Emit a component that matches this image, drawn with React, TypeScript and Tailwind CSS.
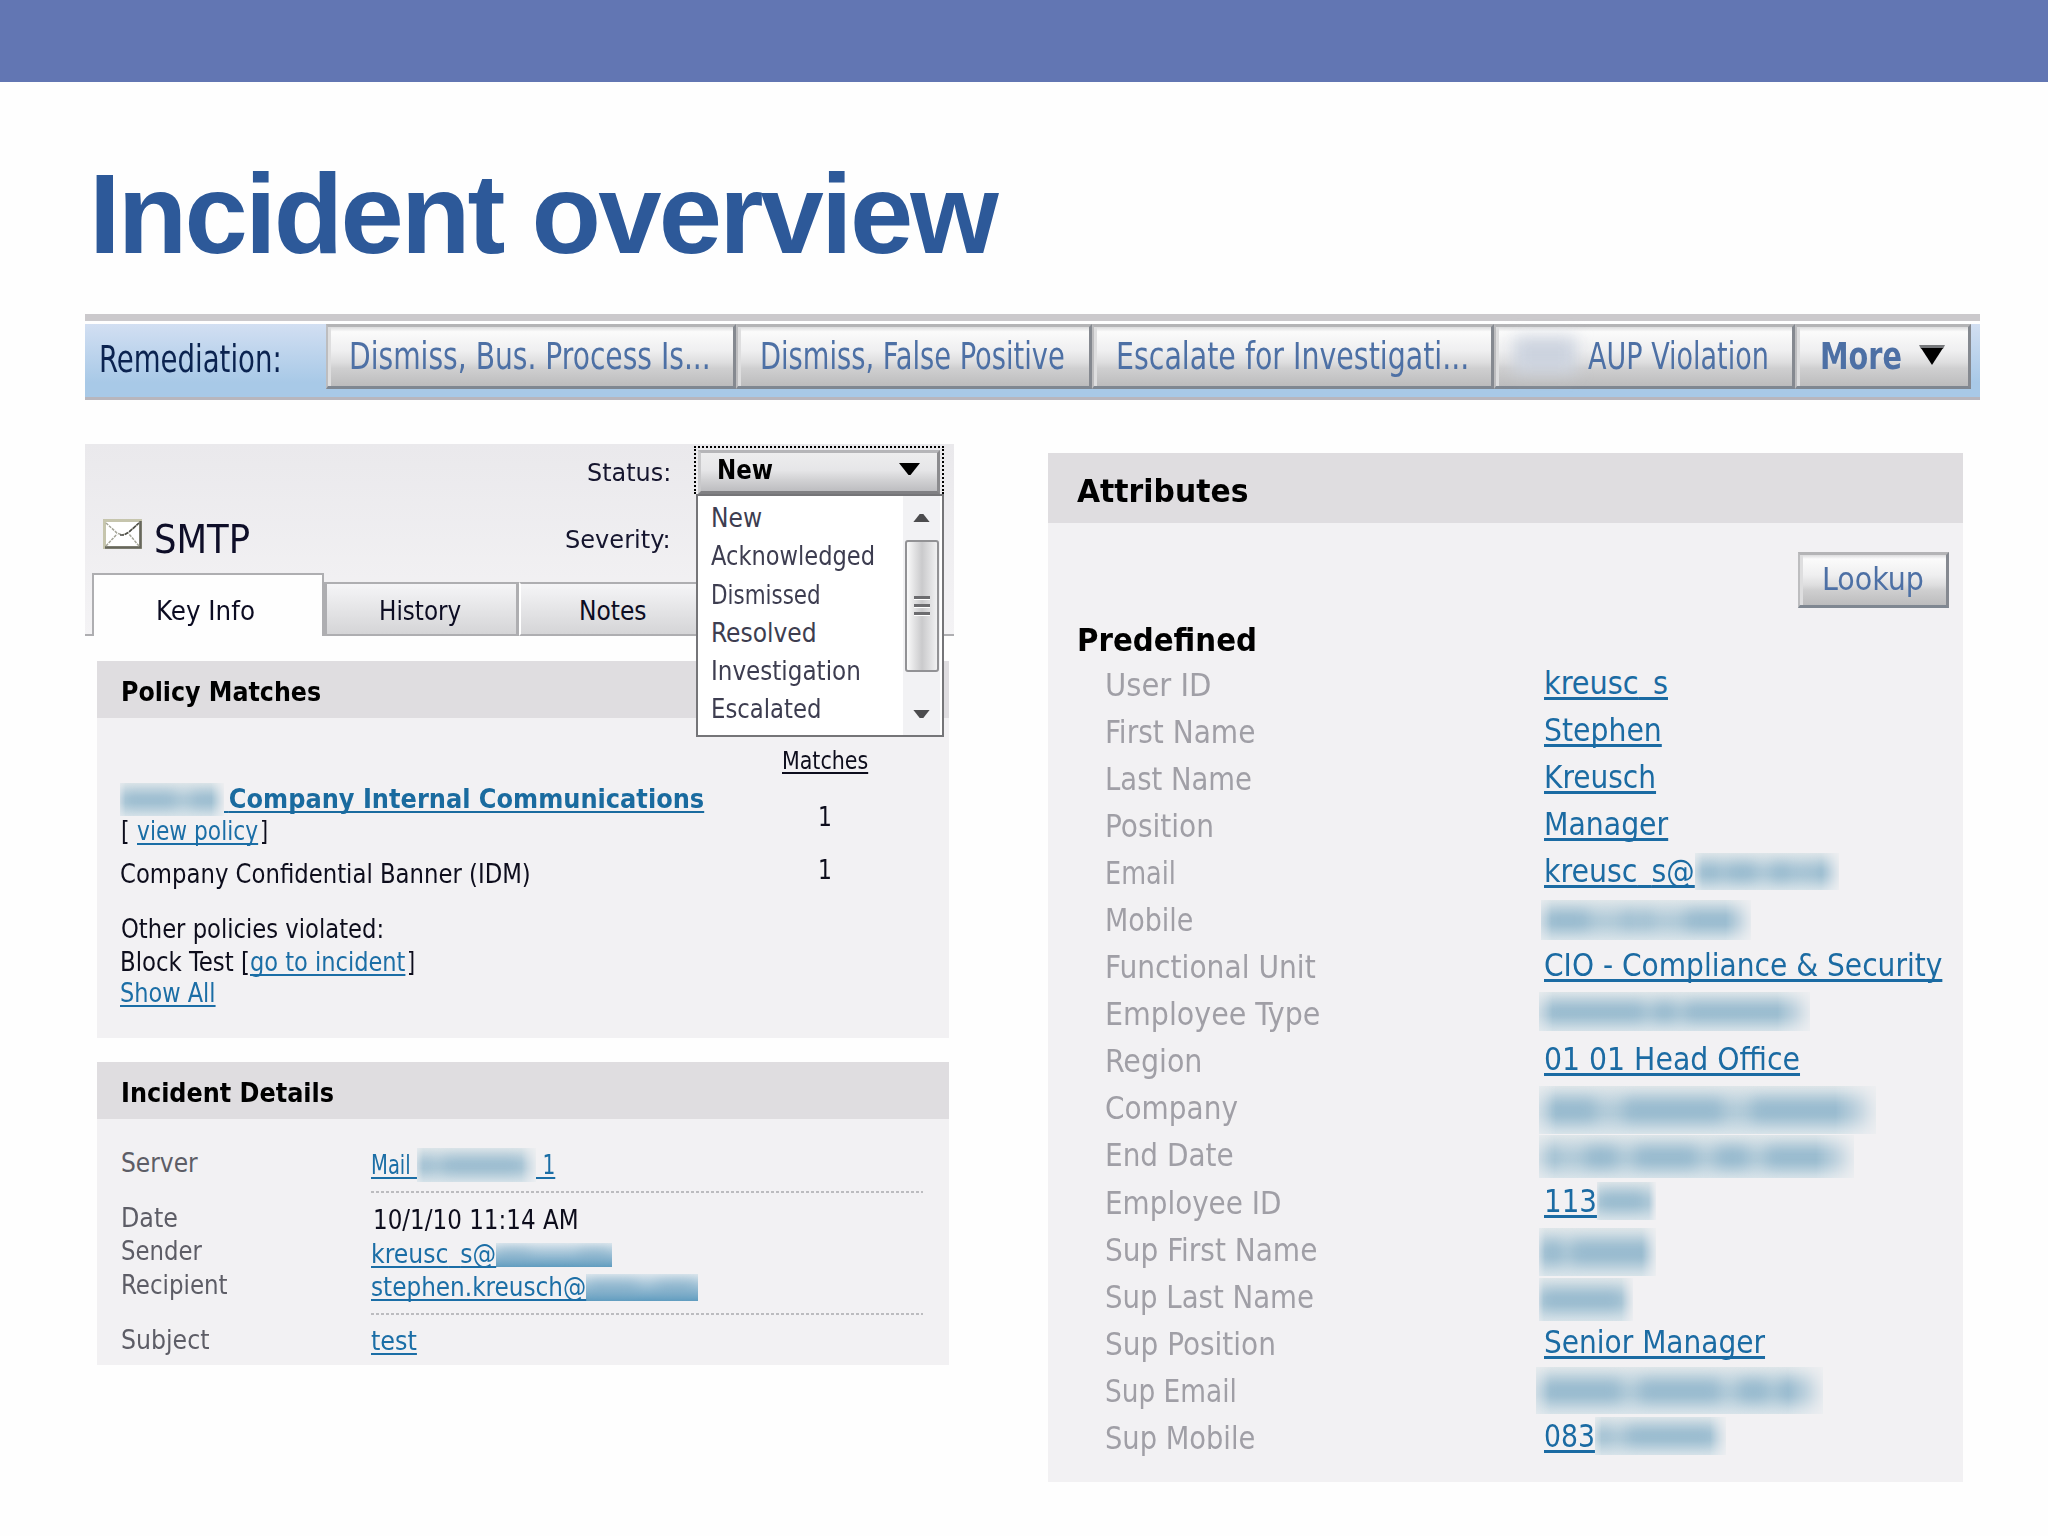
import { ReactNode, useLayoutEffect, useRef, useState } from 'react';
import clsx from 'clsx';

type AttributeRow = {
  label: string;
  labelWidth: string;
  value?: string;
  valueWidth?: string;
  hidden?: string;
  marks?: number[];
};

const STATUSES = [
  { name: 'New', width: 'w-[53px]' },
  { name: 'Acknowledged', width: 'w-[166px]' },
  { name: 'Dismissed', width: 'w-[112px]' },
  { name: 'Resolved', width: 'w-[108px]' },
  { name: 'Investigation', width: 'w-[152px]' },
  { name: 'Escalated', width: 'w-[112px]' },
];

const ATTRIBUTES: AttributeRow[] = [
  { label: 'User ID', labelWidth: 'w-[108px]', value: 'kreusc_s', valueWidth: 'w-[124px]' },
  { label: 'First Name', labelWidth: 'w-[152px]', value: 'Stephen', valueWidth: 'w-[118px]' },
  { label: 'Last Name', labelWidth: 'w-[149px]', value: 'Kreusch', valueWidth: 'w-[112px]' },
  { label: 'Position', labelWidth: 'w-[111px]', value: 'Manager', valueWidth: 'w-[124px]' },
  { label: 'Email', labelWidth: 'w-[73px]', value: 'kreusc_s@', valueWidth: 'w-[151px]', hidden: 'mt-[9px] h-[37px] w-[144px]', marks: [3, 1, 4, 2, 3, 1, 1, 1, 3] },
  { label: 'Mobile', labelWidth: 'w-[90px]', hidden: '-ml-[3px] mt-[9px] h-[40px] w-[210px]', marks: [5, 4, 1, 1, 1, 4, 7] },
  { label: 'Functional Unit', labelWidth: 'w-[213px]', value: 'CIO - Compliance & Security', valueWidth: 'w-[398px]' },
  { label: 'Employee Type', labelWidth: 'w-[217px]', hidden: '-ml-[5px] mt-[7px] h-[39px] w-[271px]', marks: [10, 1, 2, 1, 12] },
  { label: 'Region', labelWidth: 'w-[99px]', value: '01 01 Head Office', valueWidth: 'w-[256px]' },
  { label: 'Company', labelWidth: 'w-[135px]', hidden: '-ml-[5px] mt-[7px] h-[48px] w-[337px]', marks: [5, 3, 10, 3, 12] },
  { label: 'End Date', labelWidth: 'w-[131px]', hidden: '-ml-[5px] mt-[9px] h-[43px] w-[315px]', marks: [1, 3, 3, 2, 6, 2, 3, 2, 8] },
  { label: 'Employee ID', labelWidth: 'w-[178px]', value: '113', valueWidth: 'w-[53px]', hidden: 'mt-[8px] h-[38px] w-[59px]', marks: [5, 1] },
  { label: 'Sup First Name', labelWidth: 'w-[214px]', hidden: '-ml-[5px] mt-[7px] h-[48px] w-[117px]', marks: [2, 1, 8] },
  { label: 'Sup Last Name', labelWidth: 'w-[211px]', hidden: '-ml-[5px] mt-[10px] h-[43px] w-[94px]', marks: [8, 1] },
  { label: 'Sup Position', labelWidth: 'w-[173px]', value: 'Senior Manager', valueWidth: 'w-[221px]' },
  { label: 'Sup Email', labelWidth: 'w-[134px]', hidden: '-ml-[8px] mt-[5px] h-[47px] w-[287px]', marks: [8, 2, 8, 2, 3, 1, 4] },
  { label: 'Sup Mobile', labelWidth: 'w-[152px]', value: '083', valueWidth: 'w-[51px]', hidden: 'mt-[8px] h-[38px] w-[131px]', marks: [1, 2, 9, 1] },
];

// Stretches its text to the width of the box it is given
const Fit = ({ className, link, children }: { className: string; link?: boolean; children: ReactNode }) => {
  const box = useRef<HTMLDivElement>(null);
  const text = useRef<HTMLSpanElement>(null);
  const [ scale, setScale ] = useState(1);

  useLayoutEffect(() => {
    if (box.current && text.current) {
      setScale((box.current.clientWidth - (link ? 0 : 2)) / text.current.offsetWidth);
    }
  }, [ link ]);

  return (
    <div ref={box} className={clsx('shrink-0 leading-none whitespace-pre', !link && 'pl-[2px]', className)}>
      <span
        ref={text}
        className={clsx('inline-block origin-left align-top', link && 'underline decoration-[0.085em] underline-offset-[0.1em] [text-decoration-skip-ink:none]')}
        style={{ transform: `scaleX(${scale})` }}
      >
        {children}
      </span>
    </div>
  );
};

const Redacted = ({ className, marks, strong }: { className: string; marks: number[]; strong?: boolean }) => (
  <div
    className={clsx(
      'shrink-0 overflow-hidden',
      strong
        ? 'bg-linear-to-b from-[#dfe8ee] to-[#5f9cbf]'
        : 'bg-[linear-gradient(180deg,#e0e7ea,#bfd3de_45%,#bdd2dd_60%,#d9e4ea)] [mask-image:linear-gradient(90deg,rgba(0,0,0,0.6),#000_5%,#000_88%,rgba(0,0,0,0.2))]',
      className,
    )}
  >
    <div className="flex h-full items-center px-[2%] opacity-50 blur-[7px]">
      {marks.map((size, i) => (
        <div key={i} className={clsx('h-[54%]', i % 2 === 0 ? 'bg-[#73a3c0]' : 'bg-[#73a3c0]/30')} style={{ flexGrow: size }} />
      ))}
    </div>
  </div>
);

const Button = ({ className, children }: { className: string; children: ReactNode }) => (
  <button
    className={clsx(
      'flex shrink-0 items-start border-t-[3px] border-r-[3px] border-b-[3px] border-l-[2px] border-t-[#b4b4b6] border-r-[#858990] border-b-[#7f8791] border-l-[#bdbdbf]',
      'bg-[linear-gradient(180deg,#dcdcdd_0,#fbfbfb_8%,#efeff0_40%,#dededf_60%,#cfcfd0_70%,#bcbcbd_100%)] text-[#4d70a5] shadow-[inset_3px_0_0_#dededf]',
      className,
    )}
  >
    {children}
  </button>
);

const Remediation = () => (
  <section className="mt-[43px] ml-[85px] w-[1895px]">
    <div className="mb-[3px] h-[7px] bg-[#cbc9cc]" />
    <div className="flex h-[76px] items-start border-b-[3px] border-[#b8b6bd] bg-linear-to-b from-[#d2dff2] to-[#a8c9e7] to-80% text-[37px]">
      <Fit className="mt-[17px] mr-[44px] ml-[12px] w-[185px] text-[#0b2350]">Remediation:</Fit>
      <Button className="h-[65px] w-[410px] pt-[11px] pl-[19px]"><Fit className="w-[364px]">Dismiss, Bus. Process Is...</Fit></Button>
      <Button className="h-[65px] w-[356px] pt-[11px] pl-[20px]"><Fit className="w-[307px]">Dismiss, False Positive</Fit></Button>
      <Button className="h-[65px] w-[402px] pt-[11px] pl-[20px]"><Fit className="w-[355px]">Escalate for Investigati...</Fit></Button>
      <Button className="h-[65px] w-[301px] pl-[14px]">
        <div className="mt-[4px] mr-[2px] h-[50px] w-[74px]">
          <div className="mt-[6px] ml-[4px] h-[36px] w-[62px] bg-[#ccd3df] blur-[8px]" />
        </div>
        <Fit className="mt-[11px] w-[183px]">AUP Violation</Fit>
      </Button>
      <Button className="h-[65px] w-[176px] pt-[11px] pl-[21px]">
        <Fit className="w-[84px] font-bold">More</Fit>
        <svg className="mt-[7px] ml-[17px] h-[20px] w-[26px]" viewBox="0 0 26 20">
          <path d="M0 0H26L24 4H2Z" fill="#77797c" />
          <path d="M2 3H24L13 20Z" fill="#000" />
        </svg>
      </Button>
    </div>
  </section>
);

const StatusMenu = () => (
  <div className="absolute top-[2px] left-[609px] z-10 w-[250px]">
    <div className="h-[48px] border-[2px] border-b-0 border-dotted border-black p-[2px] pb-0">
      <div className="flex h-[44px] justify-between border-t-[3px] border-r-[3px] border-b-[3px] border-l-[3px] border-t-[#b5b5b8] border-r-[#8b8b8e] border-b-[#808083] border-l-[#c9c9cb] bg-[linear-gradient(180deg,#ededee_0,#e6e6e8_45%,#d2d2d4_70%,#bdbdc0_100%)]">
        <Fit className="mt-[4px] ml-[14px] w-[58px] text-[26px] font-bold text-black">New</Fit>
        <svg className="mt-[10px] mr-[17px] h-[12px] w-[21px]" viewBox="0 0 21 12">
          <path d="M0 0H21L11.500 12H9.500Z" fill="#000" />
        </svg>
      </div>
    </div>
    <div className="ml-[2px] flex h-[243px] w-[248px] justify-between border-[2px] border-[#757578] bg-white">
      <div className="pt-[9px] pl-[11px] text-[26px] text-[#3d3d50]">
        {STATUSES.map(status => (
          <div key={status.name} className="h-[38.300px]"><Fit className={status.width}>{status.name}</Fit></div>
        ))}
      </div>
      <div className="mr-[2px] flex w-[37px] flex-col items-center bg-[#f2f2f4]">
        <svg className="mt-[17px] h-[9px] w-[17px]" viewBox="0 0 18 10"><path d="M0 10L7 1H11L18 10Z" fill="#4c4c4e" /></svg>
        <div className="mt-[18px] flex h-[132px] w-[34px] flex-col items-center justify-center gap-[4px] rounded-[3px] border-[2px] border-[#929295] bg-linear-to-r from-[#fafafa] via-[#cacacc] to-[#f1f1f2]">
          <div className="h-[4px] w-[16px] border-b border-white bg-[#6c6c6f]" />
          <div className="h-[4px] w-[16px] border-b border-white bg-[#6c6c6f]" />
          <div className="h-[4px] w-[16px] border-b border-white bg-[#6c6c6f]" />
        </div>
        <svg className="mt-[38px] h-[9px] w-[17px]" viewBox="0 0 18 10"><path d="M0 0H18L11 9H7Z" fill="#4c4c4e" /></svg>
      </div>
    </div>
  </div>
);

const IncidentHeader = () => (
  <header className="relative h-[192px] bg-linear-to-b from-[#eae9ec] to-[#f4f3f5]">
    <div className="flex h-[75px] pt-[16px] pl-[500px] text-[25px]"><Fit className="w-[86px] text-[#15152e]">Status:</Fit></div>
    <div className="flex h-[54px] pl-[18px]">
      <svg className="h-[30px] w-[39px]" viewBox="0 0 39 30">
        <rect x="1.500" y="1.500" width="36" height="27" fill="#fff" stroke="#c6c5ad" strokeWidth="3" />
        <path d="M2 28.500H37.500V2" fill="none" stroke="#66665c" strokeWidth="2.500" />
        <path d="M3 4L14 14L19 16L25 14L36 4M3 27L14 15M36 27L26 15" fill="none" stroke="#a5a598" strokeWidth="1.500" strokeDasharray="3 1" />
        <path d="M17 16H21L26 13L36 4" fill="none" stroke="#4e4e48" strokeWidth="1.600" strokeDasharray="4 1" />
      </svg>
      <Fit className="mt-[1px] ml-[10px] w-[98px] text-[39px] text-[#0e0e28]">SMTP</Fit>
      <Fit className="mt-[8px] ml-[313px] w-[108px] text-[25px] text-[#15152e]">Severity:</Fit>
    </div>
    <nav className="flex h-[63px] items-end text-[26px] text-[#0c0c22]">
      <div className="h-full w-[7px] border-b-[2px] border-[#aeaeb1]" />
      <div className="h-full w-[232px] border-x-[2px] border-t-[2px] border-[#aeaeb1] bg-[#fefefe] pt-[23px] pl-[60px]"><Fit className="w-[101px]">Key Info</Fit></div>
      <div className="h-[54px] w-[195px] border-t-[2px] border-r-[3px] border-b-[2px] border-l-[3px] border-[#aeaeb1] bg-linear-to-b from-[#f5f5f7] to-[#d5d5d7] pt-[14px] pl-[50px]"><Fit className="w-[84px]">History</Fit></div>
      <div className="h-[54px] w-[190px] border-t-[2px] border-b-[2px] border-l-[2px] border-t-[#aeaeb1] border-b-[#aeaeb1] border-l-white bg-linear-to-b from-[#f5f5f7] to-[#d5d5d7] pt-[14px] pl-[56px]"><Fit className="w-[70px]">Notes</Fit></div>
      <div className="h-full flex-1 border-b-[2px] border-[#aeaeb1]" />
    </nav>
    <StatusMenu />
  </header>
);

const PolicyMatches = () => (
  <section className="mt-[25px] ml-[12px] h-[377px] w-[852px] bg-[#f2f1f3] text-[26px] text-[#0d0d1c]">
    <h2 className="h-[57px] bg-[#dfdde0] pt-[18px] pl-[22px] font-bold text-black"><Fit className="w-[202px]">Policy Matches</Fit></h2>
    <div className="flex pl-[21px]">
      <div className="w-[664px] pt-[65px]">
        <div className="flex h-[33px] items-start">
          <Redacted className="ml-[2px] h-[33px] w-[104px]" marks={[7, 2, 4]} />
          <Fit link className="mt-[3px] w-[480px] font-bold text-[#1a6b9f]">{'\u2009'}Company Internal Communications</Fit>
        </div>
        <div className="mt-[2px] flex pl-[1px]">
          <Fit className="w-[18px]">[ </Fit>
          <Fit link className="w-[121px] text-[#1b6ea6]">view policy</Fit>
          <Fit className="w-[10px]">]</Fit>
        </div>
        <Fit className="mt-[17px] w-[413px]">Company Confidential Banner (IDM)</Fit>
        <Fit className="mt-[29px] ml-[1px] w-[265px]">Other policies violated:</Fit>
        <div className="mt-[7px] flex">
          <Fit className="w-[132px]">Block Test [</Fit>
          <Fit link className="w-[155px] text-[#1b6ea6]">go to incident</Fit>
          <Fit className="w-[10px]">]</Fit>
        </div>
        <Fit link className="mt-[5px] ml-[2px] w-[96px] text-[#1b6ea6]">Show All</Fit>
      </div>
      <div className="pt-[30px]">
        <Fit link className="w-[86px] text-[25px]">Matches</Fit>
        <Fit className="mt-[31px] ml-[34px] w-[16px]">1</Fit>
        <Fit className="mt-[27px] ml-[34px] w-[16px]">1</Fit>
      </div>
    </div>
  </section>
);

const Divider = ({ className }: { className: string }) => (
  <div className={clsx('h-[2px] w-[552px] bg-[repeating-linear-gradient(90deg,#bcbcbf_0_3px,transparent_3px_5px)]', className)} />
);

const IncidentDetails = () => (
  <section className="mt-[24px] ml-[12px] h-[303px] w-[852px] bg-[#f2f1f3] text-[26px]">
    <h2 className="h-[57px] bg-[#dfdde0] pt-[18px] pl-[22px] font-bold text-black"><Fit className="w-[215px]">Incident Details</Fit></h2>
    <div className="flex pl-[22px]">
      <div className="w-[252px] pt-[31px] text-[#5d5d66]">
        <Fit className="w-[79px]">Server</Fit>
        <Fit className="mt-[29px] w-[59px]">Date</Fit>
        <Fit className="mt-[7px] w-[83px]">Sender</Fit>
        <Fit className="mt-[8px] w-[109px]">Recipient</Fit>
        <Fit className="mt-[29px] w-[90px]">Subject</Fit>
      </div>
      <div className="pt-[29px] text-[#1b6ea6]">
        <div className="flex h-[34px]">
          <Fit link className="mt-[4px] w-[46px]">Mail </Fit>
          <Redacted className="h-[34px] w-[119px]" marks={[1, 1, 7, 1]} />
          <Fit link className="mt-[4px] w-[19px]"> 1</Fit>
        </div>
        <Divider className="mt-[9px]" />
        <Fit className="mt-[14px] w-[208px] text-[#0d0d1c]">10/1/10 11:14 AM</Fit>
        <div className="mt-[8px] flex h-[27px]">
          <Fit link className="w-[125px]">kreusc<span className="relative -top-[1px]">_</span>s@</Fit>
          <Redacted strong className="mt-[2px] h-[24px] w-[116px]" marks={[3, 5, 3]} />
        </div>
        <div className="mt-[6px] flex h-[28px]">
          <Fit link className="w-[215px]">stephen.kreusch@</Fit>
          <Redacted strong className="h-[27px] w-[112px]" marks={[5, 2, 4]} />
        </div>
        <Divider className="mt-[11px]" />
        <Fit link className="mt-[13px] w-[46px]">test</Fit>
      </div>
    </div>
  </section>
);

const Attributes = () => (
  <section className="mt-[53px] ml-[94px] h-[1029px] w-[915px] bg-[#f2f1f3] text-[32px]">
    <h2 className="h-[70px] bg-[#dfdde0] pt-[22px] pl-[27px] font-bold text-black"><Fit className="w-[173px]">Attributes</Fit></h2>
    <div className="flex justify-end pt-[29px] pr-[14px]">
      <Button className="h-[56px] w-[151px] pt-[8px] pl-[20px]"><Fit className="w-[104px]">Lookup</Fit></Button>
    </div>
    <h3 className="mt-[16px] h-[32px] pl-[27px] font-bold text-black"><Fit className="w-[182px]">Predefined</Fit></h3>
    {ATTRIBUTES.map(row => (
      <div key={row.label} className="flex h-[47.060px] pl-[55px] text-[#a09fa6]">
        <div className="w-[441px] pt-[13px]"><Fit className={row.labelWidth}>{row.label}</Fit></div>
        {row.value && (
          <Fit link className={clsx('mt-[11px] text-[#1b6ba3]', row.valueWidth)}>
            {row.value.split('_').map((part, i) => (
              <span key={part}>{i > 0 && <span className="relative -top-[2px]">_</span>}{part}</span>
            ))}
          </Fit>
        )}
        {row.hidden && <Redacted className={row.hidden} marks={row.marks ?? [1]} />}
      </div>
    ))}
  </section>
);

const App = () => (
  <div className="h-[1536px] w-[2048px] overflow-hidden bg-[#fefefe] font-['DejaVu_Sans_Condensed','DejaVu_Sans',sans-serif]">
    <div className="h-[82px] bg-[#6276b3]" />
    <h1 className="mt-[75px] ml-[87px] font-['Liberation_Sans',sans-serif] text-[114px] font-bold tracking-[-2.8px] text-[#2d5999]">
      <Fit className="w-[909px]">Incident overview</Fit>
    </h1>
    <Remediation />
    <main className="flex items-start">
      <div className="mt-[44px] ml-[85px] w-[869px]">
        <IncidentHeader />
        <PolicyMatches />
        <IncidentDetails />
      </div>
      <Attributes />
    </main>
  </div>
);

export default App;
